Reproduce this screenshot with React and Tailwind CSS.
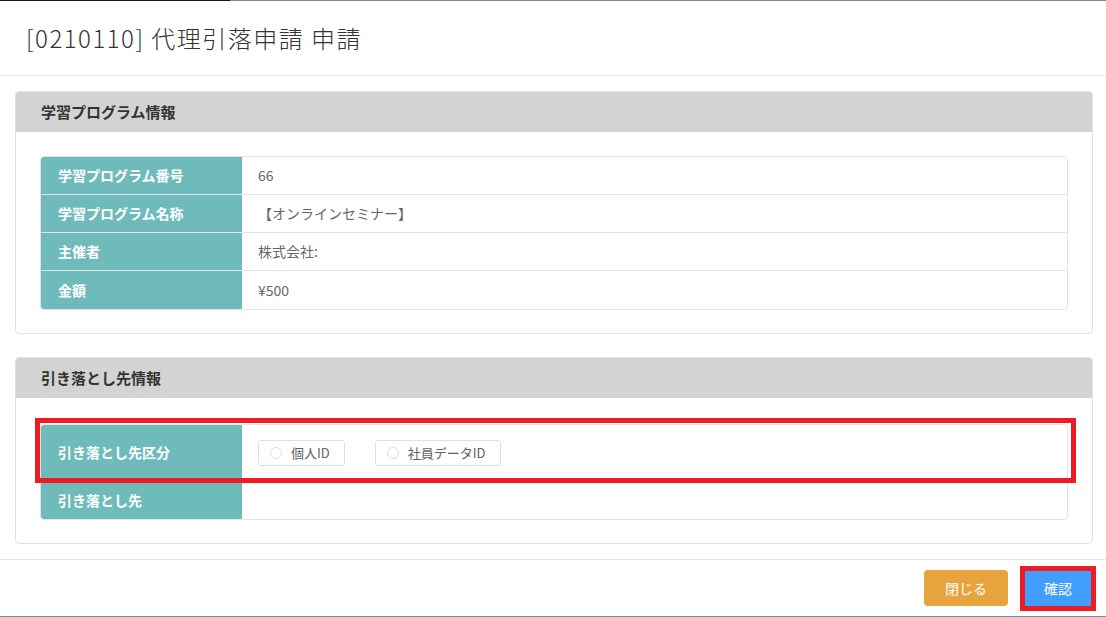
import React from "react";

const font = { fontFamily: '"Noto Sans CJK JP", "Noto Sans", sans-serif' };

const Row = ({ label, children, tall }) => (
  <div className={`flex border-b border-[#e3e3e3] last:border-b-0 ${tall ? "h-[56px]" : "h-[38px]"}`}>
    <div className="w-[201px] shrink-0 bg-[#6fbabb] flex items-center pl-[17px] text-white text-[14px] font-bold">
      {label}
    </div>
    <div className="flex-1 flex items-center pl-[16px] text-[14px] text-[#666]">{children}</div>
  </div>
);

const Panel = ({ title, children }) => (
  <div className="border border-[#e2e2e2] rounded-[4px] overflow-hidden ml-[15px] mr-[13px]">
    <div className="h-[40px] bg-[#d3d3d3] flex items-center pl-[25px] text-[15px] font-bold text-[#333]">
      {title}
    </div>
    <div className="px-[24px] pt-[24px] pb-[23px]">{children}</div>
  </div>
);

const Radio = ({ label }) => (
  <div className="h-[26px] flex items-center border border-[#dcdfe6] rounded-[3px] pl-[11px] pr-[14px] text-[13px] text-[#606266]">
    <span className="w-[12px] h-[12px] rounded-full border border-[#dcdfe6] mr-[9px]" />
    {label}
  </div>
);

export default function App() {
  return (
    <div className="w-[1106px] h-[617px] bg-white flex flex-col overflow-hidden" style={font}>
      <div className="h-[1px] flex shrink-0">
        <div className="w-[230px] bg-[#0c1824]" />
        <div className="flex-1 bg-[#858585]" />
      </div>
      <div className="h-[75px] shrink-0 border-b border-[#e5e5e5] flex items-center pl-[26px] text-[24px] tracking-[1.5px] text-[#333] font-light">
        [0210110] 代理引落申請 申請
      </div>
      <div className="pt-[15px]">
        <Panel title="学習プログラム情報">
          <div className="border border-[#e3e3e3] rounded-[4px] overflow-hidden">
            <Row label="学習プログラム番号">66</Row>
            <Row label="学習プログラム名称">【オンラインセミナー】</Row>
            <Row label="主催者">株式会社:</Row>
            <Row label="金額">¥500</Row>
          </div>
        </Panel>
      </div>
      <div className="pt-[23px]">
        <Panel title="引き落とし先情報">
          <div className="relative pt-[2px]">
            <div className="border border-[#e3e3e3] rounded-[4px] overflow-hidden">
              <Row label="引き落とし先区分" tall>
                <div className="flex gap-[30px]">
                  <Radio label="個人ID" />
                  <Radio label="社員データID" />
                </div>
              </Row>
              <Row label="引き落とし先" />
            </div>
            <div className="absolute left-[-5px] right-[-8px] top-[-4px] h-[65px] border-[5px] border-[#ec1c24] pointer-events-none" />
          </div>
        </Panel>
      </div>
      <div className="mt-[15px] border-t border-[#e5e5e5] flex-1 flex items-center justify-end pr-[10px] gap-[12px]">
        <button className="w-[84px] h-[36px] rounded-[4px] bg-[#e6a33e] text-white text-[14px]">閉じる</button>
        <div className="border-[5px] border-[#ec1c24]">
          <button className="w-[66px] h-[35px] bg-[#409eff] text-white text-[14px] block">確認</button>
        </div>
      </div>
      <div className="h-[1px] shrink-0 bg-[#858585]" />
    </div>
  );
}
